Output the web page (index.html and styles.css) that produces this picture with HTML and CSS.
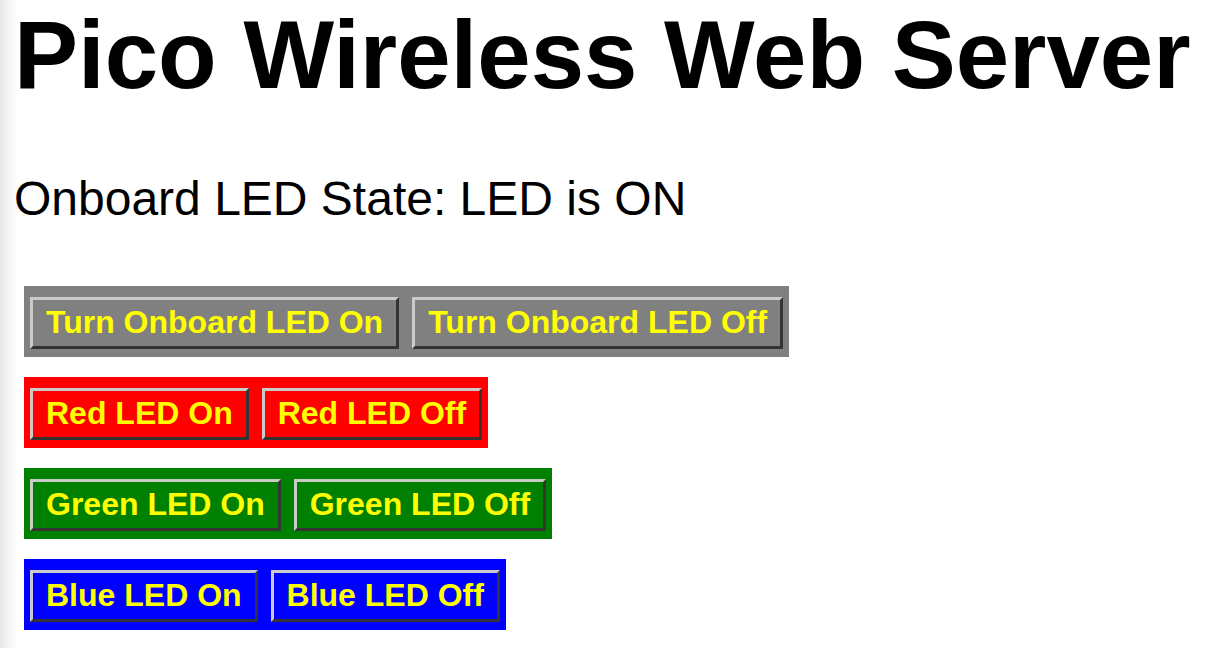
FILE: index.html
```html
<!DOCTYPE html>
<html>
<head>
<meta charset="utf-8">
<title>Pico Wireless Web Server</title>
<link rel="stylesheet" href="styles.css">
</head>
<body>
<div class="page">
  <h1 class="title">Pico Wireless Web Server</h1>
  <p class="state">Onboard LED State: LED is ON</p>
  <div class="groups">
    <div class="group group-gray">
      <button class="btn">Turn Onboard LED On</button>
      <button class="btn">Turn Onboard LED Off</button>
    </div>
    <div class="group group-red">
      <button class="btn">Red LED On</button>
      <button class="btn">Red LED Off</button>
    </div>
    <div class="group group-green">
      <button class="btn">Green LED On</button>
      <button class="btn">Green LED Off</button>
    </div>
    <div class="group group-blue">
      <button class="btn">Blue LED On</button>
      <button class="btn">Blue LED Off</button>
    </div>
  </div>
</div>
</body>
</html>
```
FILE: styles.css
```css
html, body {
  margin: 0;
  padding: 0;
}
body {
  min-height: 100vh;
  background: linear-gradient(to right, #e6e6e6 0, #f4f4f4 8px, #ffffff 18px);
  font-family: "Liberation Sans", Arial, Helvetica, sans-serif;
  color: #000;
}
.page {
  padding-left: 14px;
}
.title {
  margin: 0;
  font-size: 96px;
  font-weight: 700;
  line-height: 110px;
}
.state {
  margin: 61px 0 0 0;
  font-size: 48px;
  line-height: 55px;
}
.groups {
  margin-top: 60px;
  margin-left: 10px;
  display: flex;
  flex-direction: column;
  align-items: flex-start;
  gap: 20px;
}
.group {
  display: flex;
  gap: 13px;
  padding: 11px 6px 8px 6px;
}
.group-gray { background: #808080; }
.group-red { background: #ff0000; }
.group-green { background: #008000; }
.group-blue { background: #0000ff; }
.btn {
  font-family: "Liberation Sans", Arial, Helvetica, sans-serif;
  font-weight: 700;
  font-size: 32px;
  line-height: 37px;
  color: #ffff00;
  background: transparent;
  border-width: 3px;
  border-style: solid;
  border-color: #cacaca #333333 #333333 #cacaca;
  padding: 4px 13px 5px 13px;
  margin: 0;
  cursor: pointer;
}
```
